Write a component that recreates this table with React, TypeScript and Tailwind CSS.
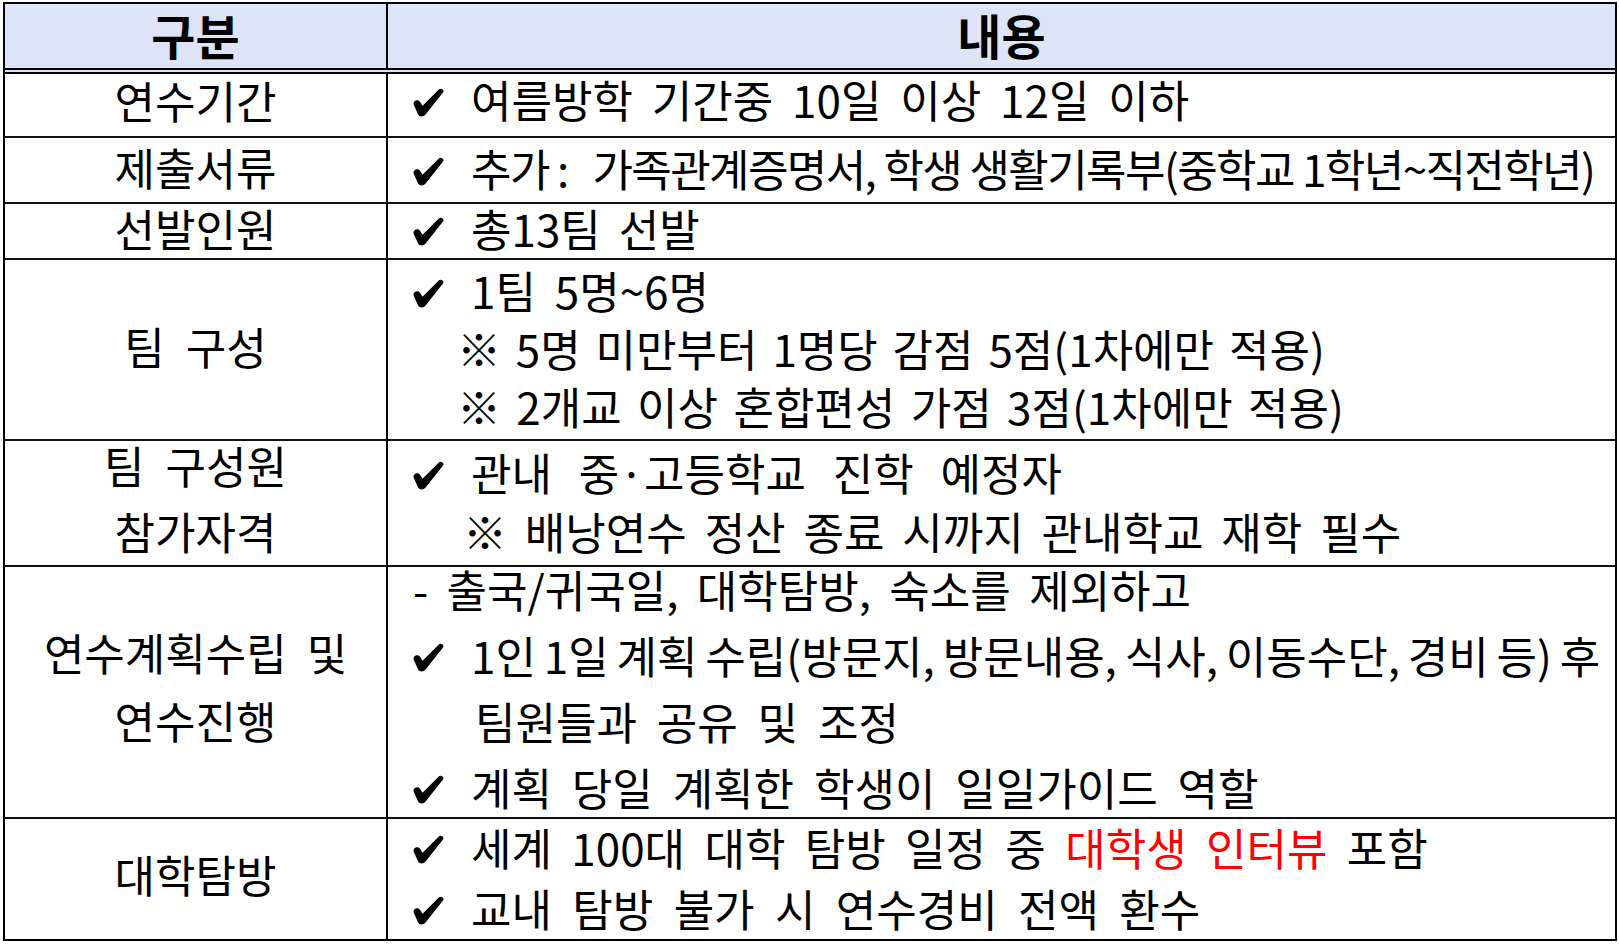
import React from "react";

function Check() {
  return (
    <svg width="32" height="29" viewBox="0 0 32 29" className="shrink-0 mt-[6px]">
      <path
        d="M0.6 16.4 C-0.2 12.6 4.6 10.6 6.8 13.6 L9.6 17.8 L25.8 1.4 C27.9 -0.6 31.8 1.8 30 4.6 L12.6 26.4 C10.6 29 6.4 29.2 5 26.2 Z"
        fill="#000"
      />
    </svg>
  );
}

function CLine({
  children,
  lh,
  ws = "[word-spacing:10px]",
}: {
  children: React.ReactNode;
  lh: string;
  ws?: string;
}) {
  return (
    <div className={`flex items-center whitespace-nowrap ${lh}`}>
      <Check />
      <span className={`ml-[26px] ${ws}`}>{children}</span>
    </div>
  );
}

export default function App() {
  return (
    <div
      className="w-[1619px] h-[944px] bg-white pt-[2px] pl-[3px] text-black text-[44px]"
      style={{ fontFamily: '"Noto Sans CJK KR", "Noto Sans", sans-serif' }}
    >
      <div className="w-[1614px] border-l-2 border-r-2 border-t-2 border-black">
        {/* header */}
        <div className="flex h-[70px] bg-[#dde4f6] border-b-[6px] border-double border-black">
          <div className="w-[383px] border-r-2 border-black flex items-center justify-center font-bold text-[48px] leading-none pb-[4px]">
            구분
          </div>
          <div className="flex-1 flex items-center justify-center font-bold text-[48px] leading-none pb-[4px]">
            내용
          </div>
        </div>

        {/* row 1 */}
        <div className="flex h-[64px] border-b-2 border-[#111]">
          <div className="w-[383px] border-r-2 border-black flex items-center justify-center leading-none pb-[11px]">
            연수기간
          </div>
          <div className="flex-1 pl-[25px] flex flex-col justify-center pb-[12px]">
            <CLine lh="leading-[52px]" ws="[word-spacing:9px]">
              여름방학 기간중 10일 이상 12일 이하
            </CLine>
          </div>
        </div>

        {/* row 2 */}
        <div className="flex h-[66px] border-b-2 border-[#111]">
          <div className="w-[383px] border-r-2 border-black flex items-center justify-center leading-none pb-[6px]">
            제출서류
          </div>
          <div className="flex-1 pl-[25px] flex flex-col justify-center pb-[4px]">
            <CLine lh="leading-[52px]" ws="tracking-[-1.6px]">
              추가 :&nbsp;&nbsp; 가족관계증명서, 학생 생활기록부(중학교 1학년~직전학년)
            </CLine>
          </div>
        </div>

        {/* row 3 */}
        <div className="flex h-[56px] border-b-2 border-[#111]">
          <div className="w-[383px] border-r-2 border-black flex items-center justify-center leading-none pb-[6px]">
            선발인원
          </div>
          <div className="flex-1 pl-[25px] flex flex-col justify-center pb-[6px]">
            <CLine lh="leading-[48px]" ws="[word-spacing:8px]">
              총13팀 선발
            </CLine>
          </div>
        </div>

        {/* row 4 */}
        <div className="flex h-[181px] border-b-2 border-[#111]">
          <div className="w-[383px] border-r-2 border-black flex items-center justify-center leading-none pb-[8px] [word-spacing:11px]">
            팀 구성
          </div>
          <div className="flex-1 pl-[25px] pt-[1px] flex flex-col whitespace-nowrap">
            <CLine lh="h-[58px] leading-[58px]" ws="[word-spacing:9px]">
              1팀 5명~6명
            </CLine>
            <div className="h-[58px] leading-[58px] pl-[44px] [word-spacing:5px]">
              ※ 5명 미만부터 1명당 감점 5점(1차에만 적용)
            </div>
            <div className="h-[58px] leading-[58px] pl-[44px] [word-spacing:5.5px]">
              ※ 2개교 이상 혼합편성 가점 3점(1차에만 적용)
            </div>
          </div>
        </div>

        {/* row 5 */}
        <div className="flex h-[126px] border-b-2 border-[#111]">
          <div className="w-[383px] border-r-2 border-black flex flex-col items-center justify-center pb-[10px] [word-spacing:11px]">
            <div className="leading-[66px]">팀 구성원</div>
            <div className="leading-[66px]">참가자격</div>
          </div>
          <div className="flex-1 pl-[25px] pt-[2px] flex flex-col whitespace-nowrap">
            <CLine lh="h-[59px] leading-[59px]" ws="[word-spacing:17px]">
              관내 중·고등학교 진학 예정자
            </CLine>
            <div className="h-[59px] leading-[59px] pl-[50px] [word-spacing:8px]">
              ※ 배낭연수 정산 종료 시까지 관내학교 재학 필수
            </div>
          </div>
        </div>

        {/* row 6 */}
        <div className="flex h-[252px] border-b-2 border-[#111]">
          <div className="w-[383px] border-r-2 border-black flex flex-col items-center justify-center pb-[13px] [word-spacing:10px]">
            <div className="leading-[68px]">연수계획수립 및</div>
            <div className="leading-[68px]">연수진행</div>
          </div>
          <div className="flex-1 pl-[25px] flex flex-col justify-center whitespace-nowrap pb-[9px]">
            <div className="leading-[66px] [word-spacing:8.5px]">
              - 출국/귀국일, 대학탐방, 숙소를 제외하고
            </div>
            <CLine lh="leading-[66px]" ws="[word-spacing:-2px]">
              1인 1일 계획 수립(방문지, 방문내용, 식사, 이동수단, 경비 등) 후
            </CLine>
            <div className="leading-[66px] pl-[62px] [word-spacing:10px]">
              팀원들과 공유 및 조정
            </div>
            <CLine lh="leading-[66px]" ws="[word-spacing:10px]">
              계획 당일 계획한 학생이 일일가이드 역할
            </CLine>
          </div>
        </div>

        {/* row 7 */}
        <div className="flex h-[122px] border-b-2 border-black">
          <div className="w-[383px] border-r-2 border-black flex items-center justify-center leading-none pb-[10px]">
            대학탐방
          </div>
          <div className="flex-1 pl-[25px] flex flex-col justify-center whitespace-nowrap pb-[5px]">
            <CLine lh="leading-[62px]" ws="[word-spacing:9.5px]">
              세계 100대 대학 탐방 일정 중 <span className="text-[#ff0000]">대학생 인터뷰</span> 포함
            </CLine>
            <CLine lh="leading-[60px]" ws="[word-spacing:10.5px]">
              교내 탐방 불가 시 연수경비 전액 환수
            </CLine>
          </div>
        </div>
      </div>
    </div>
  );
}
